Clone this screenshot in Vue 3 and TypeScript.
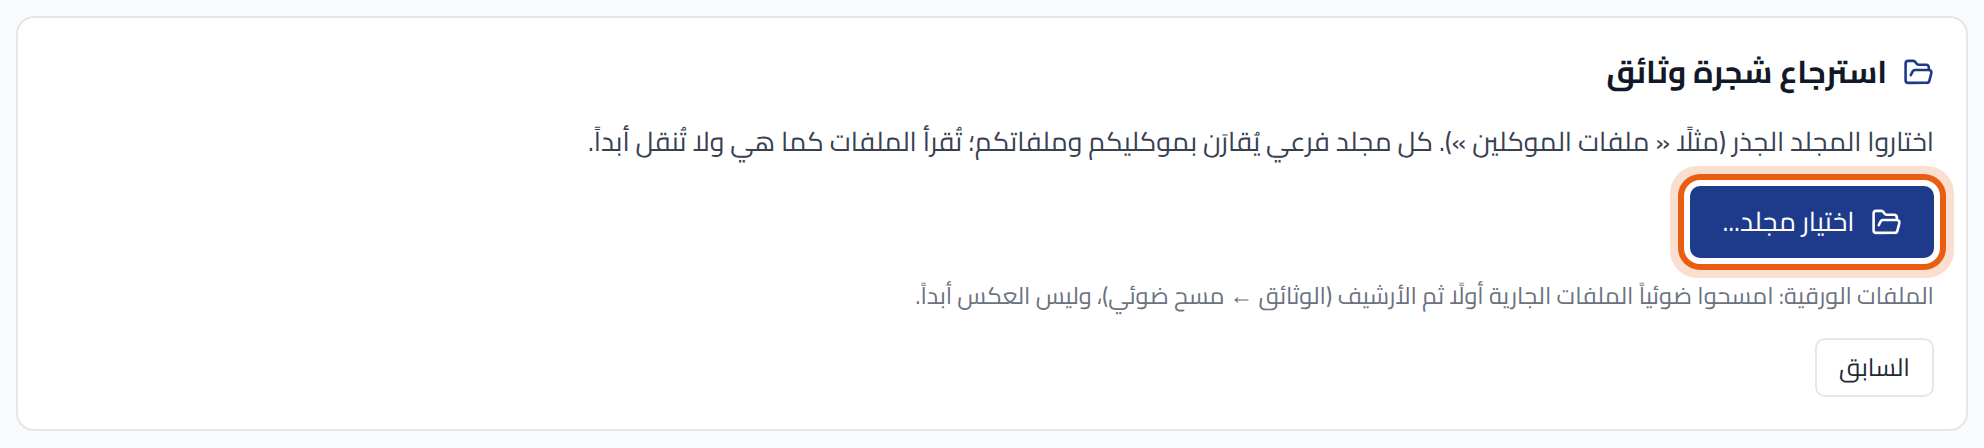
<script setup lang="ts">
const folderPath = "m6 14 1.5-2.9A2 2 0 0 1 9.24 10H20a2 2 0 0 1 1.94 2.5l-1.54 6a2 2 0 0 1-1.95 1.5H4a2 2 0 0 1-2-2V5a2 2 0 0 1 2-2h3.9a2 2 0 0 1 1.69.9l.81 1.2a2 2 0 0 0 1.67.9H18a2 2 0 0 1 2 2v2";
</script>

<template>
  <main class="page" dir="rtl" lang="ar">
    <section class="card">
      <h2 class="title">
        <svg class="icon icon-title" viewBox="0 0 24 24" aria-hidden="true"><path :d="folderPath" /></svg>
        <span>استرجاع شجرة وثائق</span>
      </h2>
      <p class="lead">اختاروا المجلد الجذر (مثلًا « ملفات الموكلين »). كل مجلد فرعي يُقارَن بموكليكم وملفاتكم؛ تُقرأ الملفات كما هي ولا تُنقل أبداً.</p>
      <div class="action">
        <button class="primary" type="button">
          <svg class="icon" viewBox="0 0 24 24" aria-hidden="true"><path :d="folderPath" /></svg>
          <span>اختيار مجلد...</span>
        </button>
      </div>
      <p class="hint">الملفات الورقية: امسحوا ضوئياً الملفات الجارية أولًا ثم الأرشيف (الوثائق ← مسح ضوئي)، وليس العكس أبداً.</p>
      <div class="footer">
        <button class="secondary" type="button">السابق</button>
      </div>
    </section>
  </main>
</template>

<style>
html, body { margin: 0; background: #f8fafc; }
</style>

<style scoped>
.page {
  box-sizing: border-box;
  width: 1984px;
  height: 448px;
  padding: 16px;
  background: #f8fafc;
  font-family: "Cairo", "Noto Sans Arabic", sans-serif;
  text-rendering: geometricPrecision;
}
.card {
  box-sizing: border-box;
  height: 415px;
  padding: 34px 32px 30px;
  background: #fff;
  border: 2px solid #e5e7eb;
  border-radius: 18px;
  display: flex;
  flex-direction: column;
}
.title {
  margin: 0;
  display: flex;
  align-items: center;
  gap: 16px;
  font-size: 31.4px;
  font-weight: 700;
  line-height: 40px;
  letter-spacing: -0.2px;
  color: #111827;
}
.icon {
  width: 31px;
  height: 31px;
  flex: none;
  fill: none;
  stroke: currentColor;
  stroke-width: 2;
  stroke-linecap: round;
  stroke-linejoin: round;
}
.icon-title { color: #1e3a8a; }
.lead {
  margin: 30px 0 0;
  font-size: 26.8px;
  line-height: 40px;
  color: #374151;
}
.action {
  margin-top: 24px;
  display: flex;
}
.primary {
  height: 72px;
  width: 244px;
  display: flex;
  align-items: center;
  justify-content: center;
  gap: 16px;
  border: 0;
  border-radius: 10px;
  background: #1e3a8a;
  color: #fff;
  font: inherit;
  font-size: 26.8px;
  text-rendering: inherit;
  box-shadow: 0 0 0 6px #fff, 0 0 0 12px #e85d10, 0 0 0 20px #fadfd0;
}
.hint {
  margin: 23px 0 0;
  font-size: 23.7px;
  line-height: 30px;
  color: #6b7280;
}
.footer {
  margin-top: 27px;
  display: flex;
}
.secondary {
  box-sizing: border-box;
  height: 59px;
  width: 119px;
  border: 2px solid #e5e7eb;
  border-radius: 10px;
  background: #fff;
  color: #1f2937;
  font: inherit;
  font-size: 24.8px;
  text-rendering: inherit;
}
</style>
